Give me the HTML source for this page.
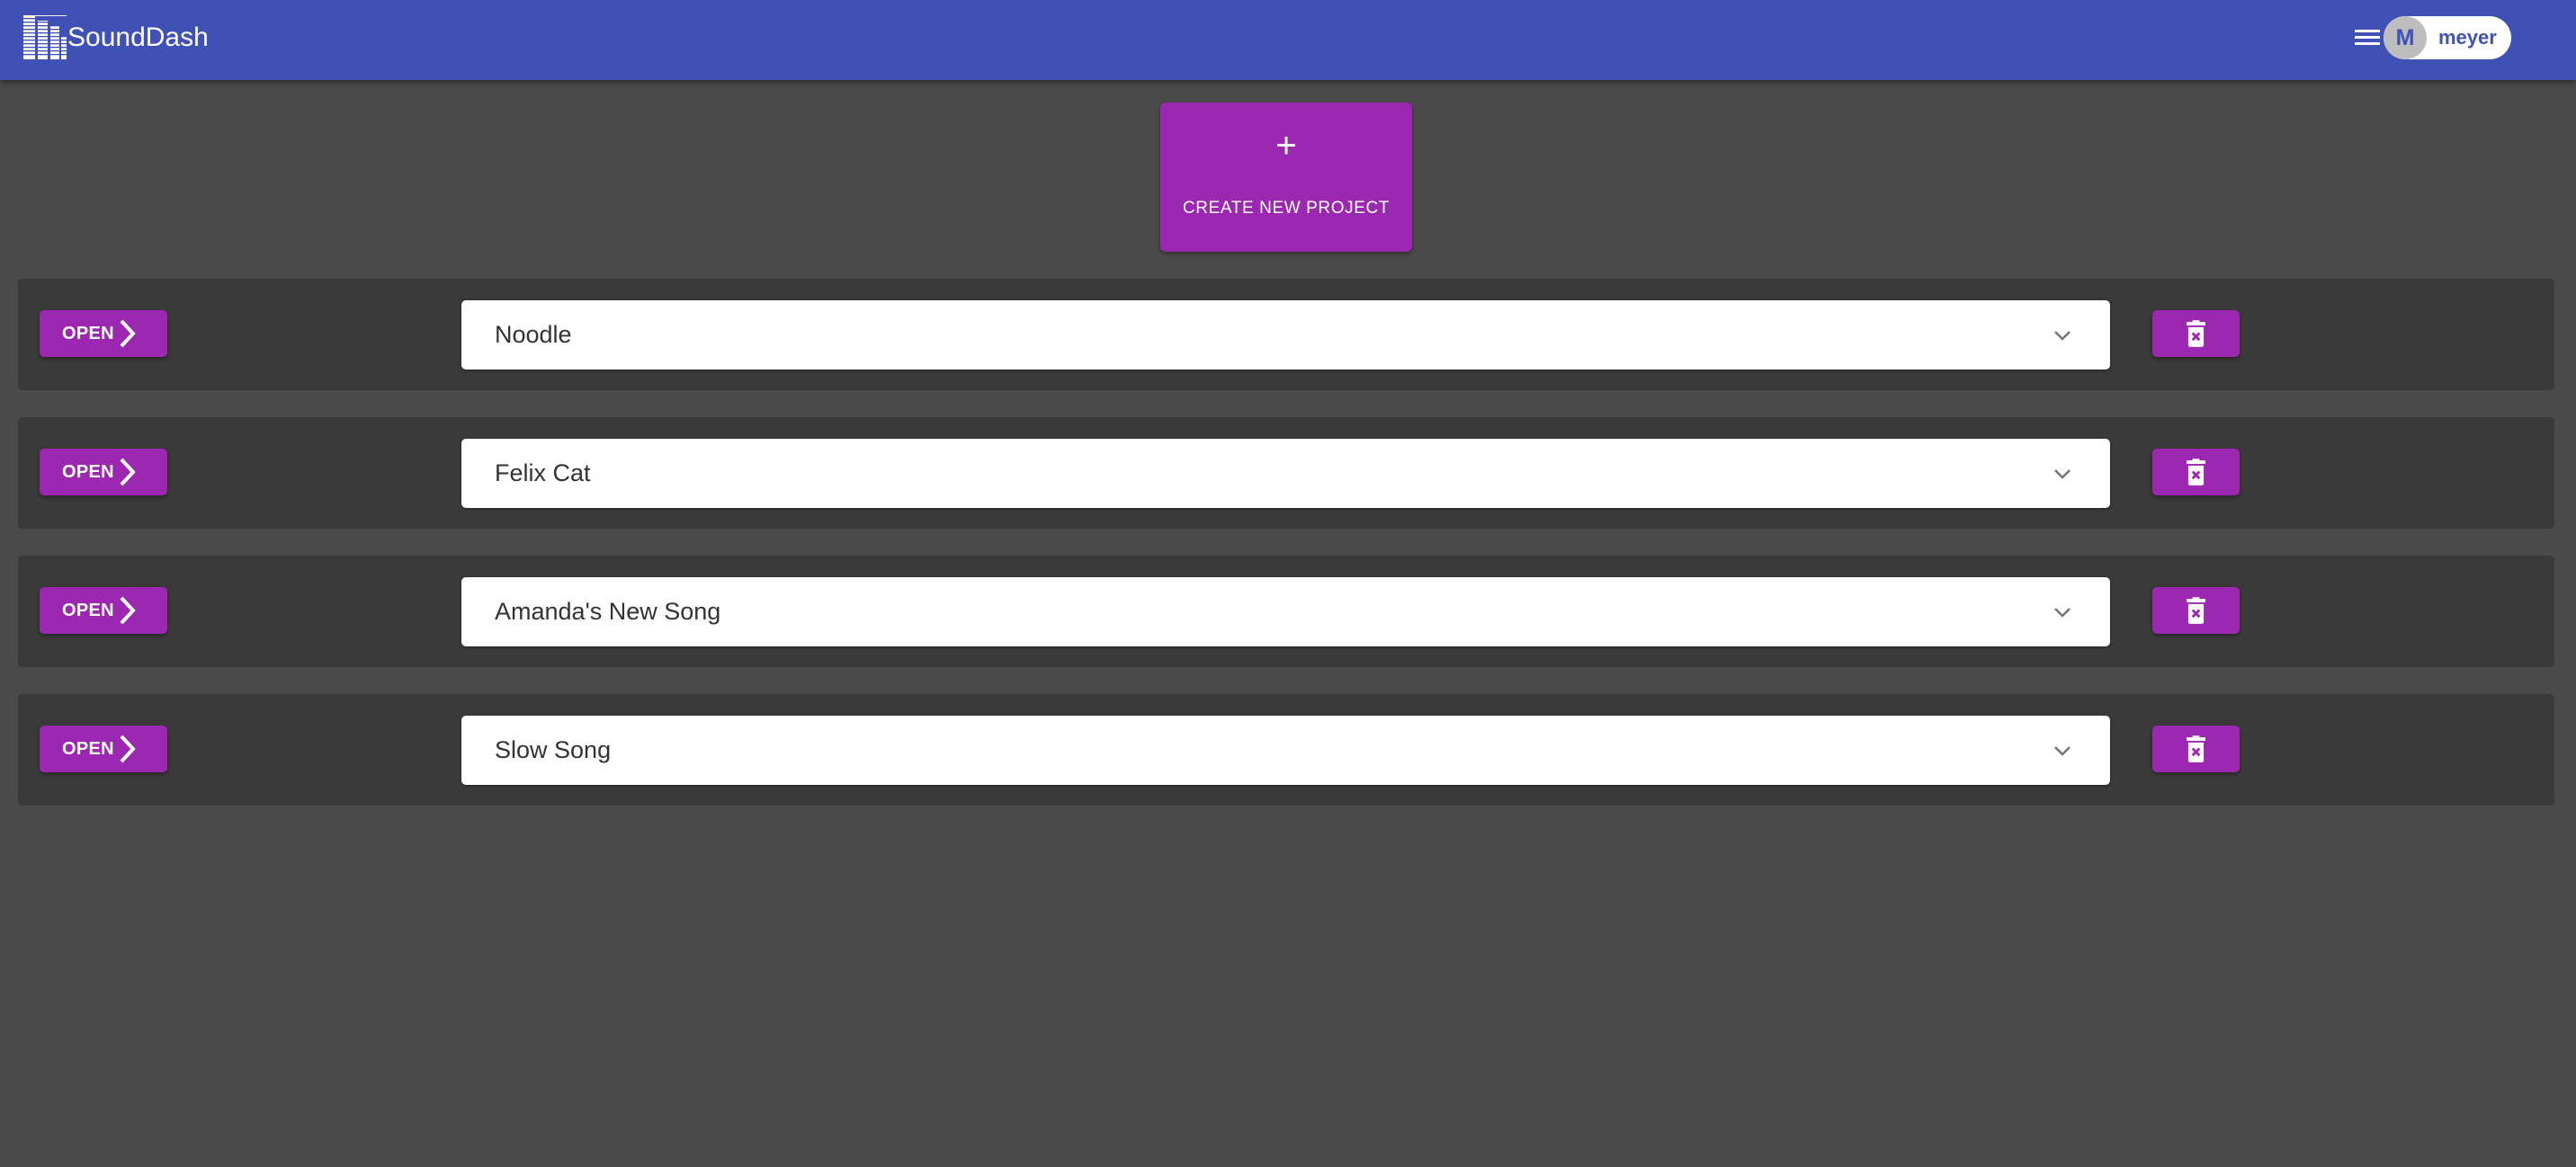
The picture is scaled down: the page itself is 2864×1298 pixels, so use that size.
<!DOCTYPE html>
<html><head><meta charset="utf-8"><style>
*{box-sizing:border-box;margin:0;padding:0}
body{width:2864px;height:1298px;background:#4a4a4a;font-family:"Liberation Sans",sans-serif;position:relative;overflow:hidden}
.hdr{position:absolute;left:0;top:0;width:2864px;height:89px;background:#3f51b5;box-shadow:0 3px 6px rgba(0,0,0,.4)}
.brand{position:absolute;left:75px;top:20px;color:#fff;font-size:30px;line-height:44px}
.pill{position:absolute;left:2650px;top:18px;width:142px;height:48px;border-radius:24px;background:#fff}
.av{position:absolute;left:0;top:0;width:48px;height:48px;border-radius:50%;background:#bdbdbd;color:#3f51b5;font-weight:bold;font-size:25px;line-height:48px;text-align:center}
.uname{position:absolute;left:61px;top:0;line-height:48px;font-size:22px;font-weight:bold;color:#3f51b5}
.create{position:absolute;left:1290px;top:114px;width:280px;height:166px;background:#9c27b0;border-radius:6px;box-shadow:0 2px 5px rgba(0,0,0,.4);color:#fff;text-align:center}
.plus{position:absolute;left:0;right:0;top:28px;font-size:40px;line-height:40px}
.ctext{position:absolute;left:0;right:0;top:106px;font-size:19px;letter-spacing:.6px;line-height:24px}
.row{position:absolute;left:20px;width:2820px;height:124px;background:#3a3a3a;border-radius:4px}
.open{position:absolute;left:24px;top:35px;width:142px;height:52px;background:#9c27b0;border-radius:5px;box-shadow:0 2px 4px rgba(0,0,0,.4);color:#fff;font-size:20px;line-height:52px;padding-left:25px;letter-spacing:.3px;font-weight:bold}
.open svg{position:absolute;left:88px;top:9px}
.sel{position:absolute;left:493px;top:24px;width:1833px;height:77px;background:#fff;border-radius:5px;box-shadow:0 1px 3px rgba(0,0,0,.4);font-size:27px;color:#333;line-height:77px;padding-left:37px}
.sel svg{position:absolute;left:1770px;top:32px}
.del{position:absolute;left:2373px;top:35px;width:97px;height:52px;background:#9c27b0;border-radius:5px;box-shadow:0 2px 4px rgba(0,0,0,.4)}
.del svg{position:absolute;left:38px;top:11px}
</style></head><body>
<div class="hdr">
<svg style="position:absolute;left:26px;top:17px" width="48" height="49" viewBox="0 0 48 49">
<g fill="#fff">
<rect x="0" y="0" width="48" height="1"/>
<rect x="0" y="0" width="13" height="49"/>
<rect x="16" y="6" width="11" height="43"/>
<rect x="30" y="12" width="10" height="37"/>
<rect x="42" y="24" width="6" height="25"/>
</g>
<g fill="#3f51b5">
<rect x="0" y="3" width="48" height="1.3"/><rect x="0" y="7" width="48" height="1.3"/><rect x="0" y="11" width="48" height="1.3"/><rect x="0" y="15" width="48" height="1.3"/><rect x="0" y="19" width="48" height="1.3"/><rect x="0" y="23" width="48" height="1.3"/><rect x="0" y="27" width="48" height="1.3"/><rect x="0" y="31" width="48" height="1.3"/><rect x="0" y="35" width="48" height="1.3"/><rect x="0" y="39" width="48" height="1.3"/><rect x="0" y="43" width="48" height="1.3"/>
</g></svg>
<div class="brand">SoundDash</div>
<svg style="position:absolute;left:2618px;top:32px" width="28" height="20"><rect y="1" width="28" height="3" fill="#fff"/><rect y="8" width="28" height="3" fill="#fff"/><rect y="15" width="28" height="3" fill="#fff"/></svg>
<div class="pill"><div class="av">M</div><div class="uname">meyer</div></div>
</div>
<div class="create"><div class="plus">+</div><div class="ctext">CREATE NEW PROJECT</div></div>

<div class="row" style="top:310px"><div class="open">OPEN<svg width="20" height="34" viewBox="0 0 20 34"><path d="M3 3 L16 17 L3 31" stroke="#fff" stroke-width="4" fill="none"/></svg></div><div class="sel">Noodle<svg width="20" height="14" viewBox="0 0 20 14"><path d="M2 3 L10 11 L18 3" stroke="#757575" stroke-width="2.5" fill="none"/></svg></div><div class="del"><svg width="21" height="31" viewBox="0 0 22 32"><rect x="0" y="2" width="22" height="4" fill="#fff"/><rect x="7" y="0" width="8" height="3" fill="#fff"/><path d="M2 8 H20 V29 Q20 31 18 31 H4 Q2 31 2 29Z" fill="#fff"/><path d="M7 15 L15 23 M15 15 L7 23" stroke="#9c27b0" stroke-width="3"/></svg></div></div>

<div class="row" style="top:464px"><div class="open">OPEN<svg width="20" height="34" viewBox="0 0 20 34"><path d="M3 3 L16 17 L3 31" stroke="#fff" stroke-width="4" fill="none"/></svg></div><div class="sel">Felix Cat<svg width="20" height="14" viewBox="0 0 20 14"><path d="M2 3 L10 11 L18 3" stroke="#757575" stroke-width="2.5" fill="none"/></svg></div><div class="del"><svg width="21" height="31" viewBox="0 0 22 32"><rect x="0" y="2" width="22" height="4" fill="#fff"/><rect x="7" y="0" width="8" height="3" fill="#fff"/><path d="M2 8 H20 V29 Q20 31 18 31 H4 Q2 31 2 29Z" fill="#fff"/><path d="M7 15 L15 23 M15 15 L7 23" stroke="#9c27b0" stroke-width="3"/></svg></div></div>

<div class="row" style="top:618px"><div class="open">OPEN<svg width="20" height="34" viewBox="0 0 20 34"><path d="M3 3 L16 17 L3 31" stroke="#fff" stroke-width="4" fill="none"/></svg></div><div class="sel">Amanda's New Song<svg width="20" height="14" viewBox="0 0 20 14"><path d="M2 3 L10 11 L18 3" stroke="#757575" stroke-width="2.5" fill="none"/></svg></div><div class="del"><svg width="21" height="31" viewBox="0 0 22 32"><rect x="0" y="2" width="22" height="4" fill="#fff"/><rect x="7" y="0" width="8" height="3" fill="#fff"/><path d="M2 8 H20 V29 Q20 31 18 31 H4 Q2 31 2 29Z" fill="#fff"/><path d="M7 15 L15 23 M15 15 L7 23" stroke="#9c27b0" stroke-width="3"/></svg></div></div>

<div class="row" style="top:772px"><div class="open">OPEN<svg width="20" height="34" viewBox="0 0 20 34"><path d="M3 3 L16 17 L3 31" stroke="#fff" stroke-width="4" fill="none"/></svg></div><div class="sel">Slow Song<svg width="20" height="14" viewBox="0 0 20 14"><path d="M2 3 L10 11 L18 3" stroke="#757575" stroke-width="2.5" fill="none"/></svg></div><div class="del"><svg width="21" height="31" viewBox="0 0 22 32"><rect x="0" y="2" width="22" height="4" fill="#fff"/><rect x="7" y="0" width="8" height="3" fill="#fff"/><path d="M2 8 H20 V29 Q20 31 18 31 H4 Q2 31 2 29Z" fill="#fff"/><path d="M7 15 L15 23 M15 15 L7 23" stroke="#9c27b0" stroke-width="3"/></svg></div></div>
</body></html>
